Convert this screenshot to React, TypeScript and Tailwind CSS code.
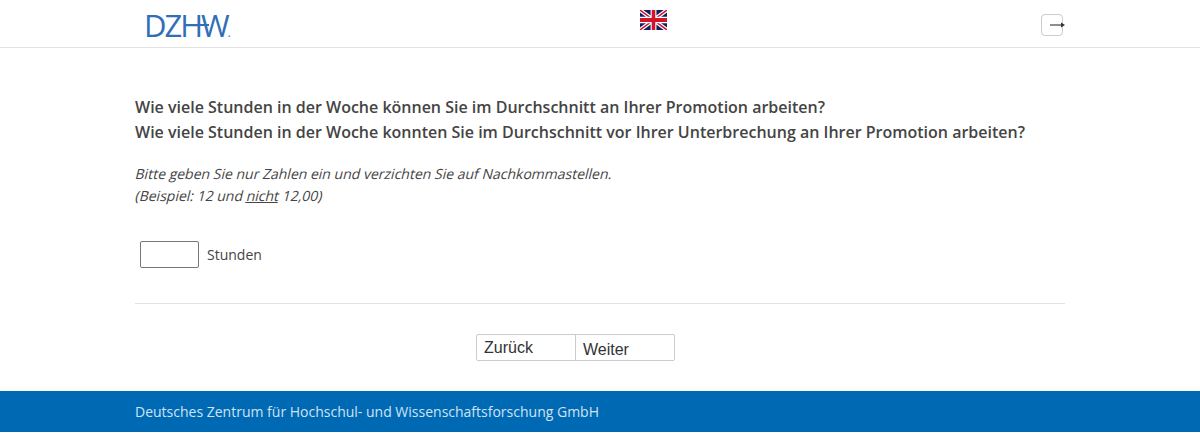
export default function App() {
  return (
    <div className="min-h-[441px] bg-white font-['Open_Sans',sans-serif] text-[14px] text-[#444]">
      <header className="h-[48px] border-b border-[#e2e2e2]">
        <div className="mx-auto flex h-[47px] w-[930px] items-start justify-between">
          <div className="relative ml-[9px] mt-[9px] w-[86px] font-['Open_Sans',sans-serif] text-[31px] font-normal leading-[32px] tracking-[-2px] text-[#2f6fb8]">
            DZHW<span className="text-[10px] font-semibold tracking-normal">.</span>
            <span className="absolute left-[54px] top-[15px] h-[2px] w-[11px] bg-[#2f6fb8]" />
          </div>
          <svg className="ml-[35px] mt-[10px]" width="27" height="20" viewBox="0 0 60 40" preserveAspectRatio="none">
            <rect width="60" height="40" fill="#14205e" />
            <path d="M0 0L60 40M60 0L0 40" stroke="#fff" strokeWidth="8" />
            <path d="M0 0L60 40M60 0L0 40" stroke="#cf142b" strokeWidth="3" />
            <path d="M30 0V40M0 20H60" stroke="#fff" strokeWidth="13" />
            <path d="M30 0V40M0 20H60" stroke="#cf142b" strokeWidth="8" />
          </svg>
          <div className="relative mr-[2px] mt-[14px] h-[22px] w-[22px] rounded-[4px] border border-[#ccc]">
            <svg className="absolute left-[8px] top-[5px]" width="16" height="10" viewBox="0 0 16 10">
              <path d="M0 5H11" stroke="#444" strokeWidth="1.2" />
              <path d="M11 2.5L15 5L11 7.5Z" fill="#333" />
            </svg>
          </div>
        </div>
      </header>
      <main className="mx-auto w-[930px] pt-[47px]">
        <h1 className="text-[16px] font-semibold leading-[25px] text-[#444]">
          Wie viele Stunden in der Woche können Sie im Durchschnitt an Ihrer Promotion arbeiten?
          <br />
          Wie viele Stunden in der Woche konnten Sie im Durchschnitt vor Ihrer Unterbrechung an Ihrer Promotion arbeiten?
        </h1>
        <div className="mt-[18px] text-[14px] leading-[22px]">
          <p className="origin-[0_65%] skew-x-[-14deg]">Bitte geben Sie nur Zahlen ein und verzichten Sie auf Nachkommastellen.</p>
          <p className="origin-[0_65%] skew-x-[-14deg]">(Beispiel: 12 und <u>nicht</u> 12,00)</p>
        </div>
        <div className="mt-[34px] flex items-center gap-[8px] pl-[5px]">
          <input className="h-[27px] w-[59px] rounded-[2px] border border-[#767676] bg-white" />
          <span>Stunden</span>
        </div>
        <hr className="mt-[35px] border-[#e2e2e2]" />
        <div className="mt-[30px] flex justify-center pr-[49px] font-['Liberation_Sans',sans-serif] text-[16px] leading-none text-[#333]">
          <div className="flex h-[27px] w-[199px] rounded-[2px] border border-[#ccc]">
            <button className="h-full w-[99px] border-r border-[#ccc] pl-[7px] text-left">Zurück</button>
            <button className="h-full flex-1 pl-[7px] pt-[4px] text-left">Weiter</button>
          </div>
        </div>
      </main>
      <footer className="mt-[30px] h-[41px] bg-[#0069b4]">
        <div className="mx-auto w-[930px] text-[14px] leading-[41px] text-[#cfe3f3]">
          Deutsches Zentrum für Hochschul- und Wissenschaftsforschung GmbH
        </div>
      </footer>
    </div>
  )
}
